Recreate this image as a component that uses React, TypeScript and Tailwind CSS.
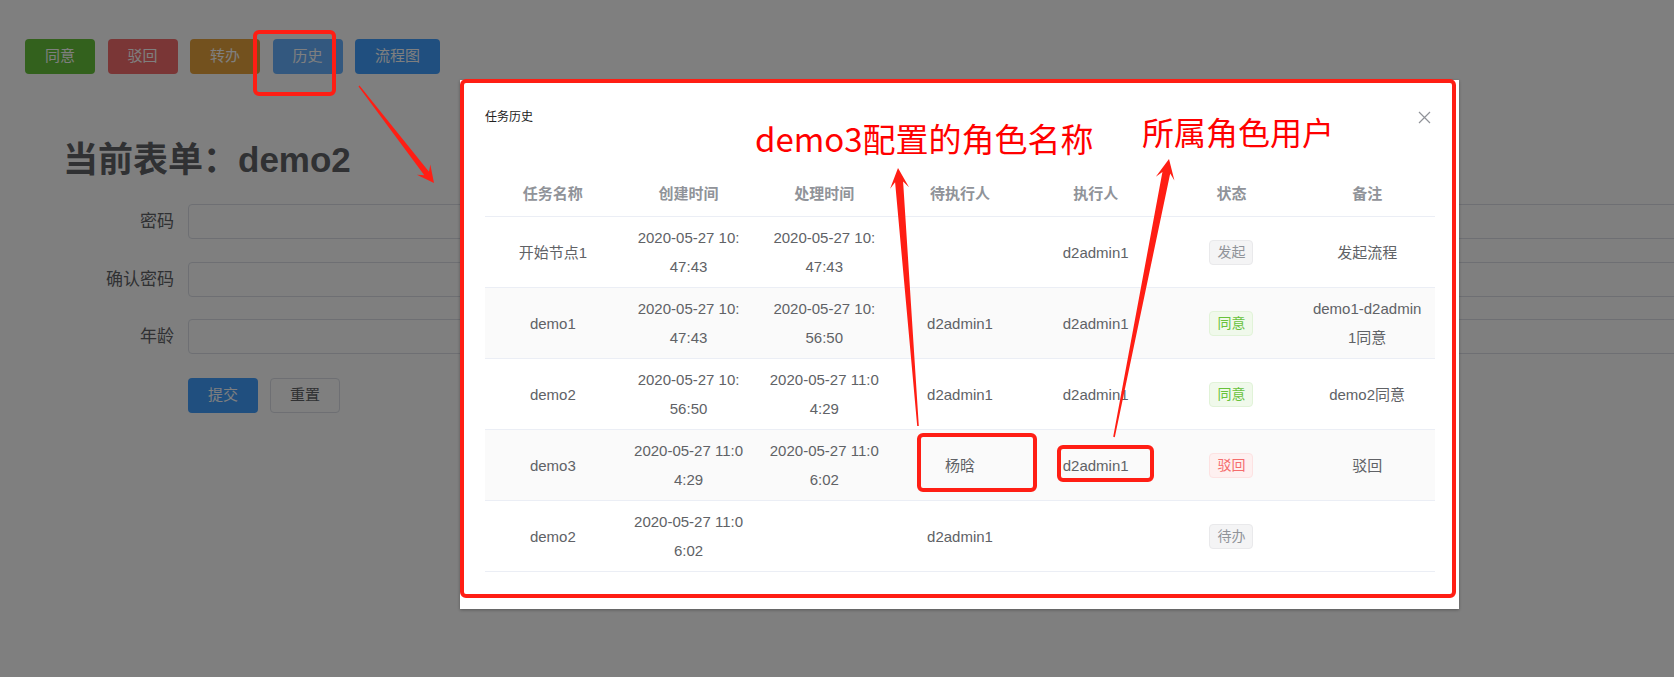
import React from "react";

const FONT = '"Liberation Sans", "Noto Sans CJK SC", sans-serif';

type TagType = "info" | "success" | "danger";

function Tag({ type, children }: { type: TagType; children: React.ReactNode }) {
  const cls =
    type === "success"
      ? "bg-[#f0f9eb] border-[#e1f3d8] text-[#67c23a]"
      : type === "danger"
      ? "bg-[#fef0f0] border-[#fde2e2] text-[#f56c6c]"
      : "bg-[#f4f4f5] border-[#e9e9eb] text-[#909399]";
  return (
    <span className={`inline-flex h-[25px] items-center rounded-[4px] border px-[7px] text-[14px] leading-none ${cls}`}>
      {children}
    </span>
  );
}

type Cell = string | string[] | { tag: TagType; text: string } | null;

const rows: Cell[][] = [
  ["开始节点1", ["2020-05-27 10:", "47:43"], ["2020-05-27 10:", "47:43"], null, "d2admin1", { tag: "info", text: "发起" }, "发起流程"],
  ["demo1", ["2020-05-27 10:", "47:43"], ["2020-05-27 10:", "56:50"], "d2admin1", "d2admin1", { tag: "success", text: "同意" }, ["demo1-d2admin", "1同意"]],
  ["demo2", ["2020-05-27 10:", "56:50"], ["2020-05-27 11:0", "4:29"], "d2admin1", "d2admin1", { tag: "success", text: "同意" }, "demo2同意"],
  ["demo3", ["2020-05-27 11:0", "4:29"], ["2020-05-27 11:0", "6:02"], "杨晗", "d2admin1", { tag: "danger", text: "驳回" }, "驳回"],
  ["demo2", ["2020-05-27 11:0", "6:02"], null, "d2admin1", null, { tag: "info", text: "待办" }, null],
];

const headers = ["任务名称", "创建时间", "处理时间", "待执行人", "执行人", "状态", "备注"];

function renderCell(c: Cell) {
  if (c === null) return null;
  if (typeof c === "string") return <span>{c}</span>;
  if (Array.isArray(c))
    return (
      <div className="flex flex-col items-center">
        {c.map((l, i) => (
          <span key={i} className="whitespace-nowrap">
            {l}
          </span>
        ))}
      </div>
    );
  return <Tag type={c.tag}>{c.text}</Tag>;
}

function arrowPoints(
  tx: number,
  ty: number,
  hx: number,
  hy: number,
  tailW: number,
  neckW: number,
  headW: number,
  headLen: number,
  neckBack: number
) {
  const dx = hx - tx;
  const dy = hy - ty;
  const L = Math.hypot(dx, dy);
  const ux = dx / L;
  const uy = dy / L;
  const nx = -uy;
  const ny = ux;
  const neck = [hx - ux * neckBack, hy - uy * neckBack];
  const barb = [hx - ux * headLen, hy - uy * headLen];
  const pts = [
    [tx + nx * tailW, ty + ny * tailW],
    [neck[0] + nx * neckW, neck[1] + ny * neckW],
    [barb[0] + nx * headW, barb[1] + ny * headW],
    [hx, hy],
    [barb[0] - nx * headW, barb[1] - ny * headW],
    [neck[0] - nx * neckW, neck[1] - ny * neckW],
    [tx - nx * tailW, ty - ny * tailW],
  ];
  return pts.map((p) => `${p[0].toFixed(1)},${p[1].toFixed(1)}`).join(" ");
}

const RED = "#ff1e14";

export default function App() {
  return (
    <div className="relative h-[677px] w-[1674px] overflow-hidden bg-white" style={{ fontFamily: FONT }}>
      {/* Page underneath */}
      <div className="flex gap-[12.5px] pl-[25px] pt-[39px]">
        <button className="h-[35px] rounded-[4px] bg-[#67c23a] px-[20px] text-[15px] text-white">同意</button>
        <button className="h-[35px] rounded-[4px] bg-[#f56c6c] px-[20px] text-[15px] text-white">驳回</button>
        <button className="h-[35px] rounded-[4px] bg-[#e6a23c] px-[20px] text-[15px] text-white">转办</button>
        <button className="h-[35px] rounded-[4px] bg-[#66b1ff] px-[20px] text-[15px] text-white">历史</button>
        <button className="h-[35px] rounded-[4px] bg-[#409eff] px-[20px] text-[15px] text-white">流程图</button>
      </div>

      <h2 className="ml-[63px] mt-[66px] text-[35px] font-bold leading-[40px] text-[#606266]">当前表单：demo2</h2>

      <div className="mt-[24px] flex flex-col pl-[74px]">
        {["密码", "确认密码", "年龄"].map((label, i) => (
          <div key={label} className={`flex h-[35px] items-center ${i === 1 ? "mt-[23px]" : i === 2 ? "mt-[22px]" : ""}`}>
            <div className="w-[100px] shrink-0 whitespace-nowrap text-right text-[17px] text-[#606266]">{label}</div>
            <div className="ml-[14px] h-[35px] w-[1600px] shrink-0 rounded-[4px] border border-[#dcdfe6] bg-white" />
          </div>
        ))}
        <div className="mt-[24px] flex gap-[12px] pl-[114px]">
          <button className="h-[35px] w-[70px] rounded-[4px] bg-[#409eff] text-[15px] text-white">提交</button>
          <button className="h-[35px] w-[70px] rounded-[4px] border border-[#dcdfe6] bg-white text-[15px] text-[#606266]">
            重置
          </button>
        </div>
      </div>

      {/* Mask */}
      <div className="absolute inset-0 bg-[rgba(0,0,0,0.5)]" />

      {/* Dialog */}
      <div className="absolute left-[460px] top-[80px] h-[529px] w-[999px] bg-white shadow-[0_1px_3px_rgba(0,0,0,0.3)]">
        <div className="flex h-[92px] items-start justify-between pl-[25px] pr-[28px] pt-[27px]">
          <span className="text-[12px] leading-[20px] text-[#222]">任务历史</span>
          <svg width="13" height="13" viewBox="0 0 13 13" className="mt-[4px]">
            <path d="M1 1 L12 12 M12 1 L1 12" stroke="#909399" strokeWidth="1.2" fill="none" />
          </svg>
        </div>
        <div className="mx-[25px] w-[950px]">
          <div className="grid h-[45px] grid-cols-7 items-center border-b border-[#ebeef5]">
            {headers.map((h) => (
              <div key={h} className="text-center text-[15px] font-bold text-[#909399]">
                {h}
              </div>
            ))}
          </div>
          {rows.map((r, ri) => (
            <div
              key={ri}
              className={`grid h-[71px] grid-cols-7 items-center border-b border-[#ebeef5] ${ri % 2 === 1 ? "bg-[#fafafa]" : "bg-white"}`}
            >
              {r.map((c, ci) => (
                <div key={ci} className="flex justify-center px-[10px] text-center text-[15px] leading-[29px] text-[#606266]">
                  {renderCell(c)}
                </div>
              ))}
            </div>
          ))}
        </div>
      </div>

      {/* Annotations */}
      <svg className="pointer-events-none absolute left-0 top-0" width="1674" height="677" viewBox="0 0 1674 677">
        <rect x="255" y="32" width="79" height="62" rx="4" fill="none" stroke={RED} strokeWidth="4" />
        <rect x="462" y="81" width="992" height="515" rx="4" fill="none" stroke={RED} strokeWidth="4" />
        <rect x="919" y="435" width="116" height="55" rx="4" fill="none" stroke={RED} strokeWidth="4" />
        <rect x="1059" y="447" width="93" height="33" rx="4" fill="none" stroke={RED} strokeWidth="4" />
        <polygon points={arrowPoints(359, 86, 434, 183, 0.6, 3, 8.5, 17, 12)} fill={RED} />
        <polygon points={arrowPoints(918, 426, 898, 168, 0.8, 4, 9.5, 20, 14)} fill={RED} />
        <polygon points={arrowPoints(1114, 437, 1169, 159, 0.8, 4, 9.5, 20, 14)} fill={RED} />
      </svg>
      <div
        className="pointer-events-none absolute left-[755px] top-[118px] whitespace-nowrap text-[33px] leading-[40px] text-[#ff0000]"
        style={{ fontFamily: '"Noto Sans CJK SC", sans-serif' }}
      >
        demo3配置的角色名称
      </div>
      <div
        className="pointer-events-none absolute left-[1142px] top-[111px] whitespace-nowrap text-[32px] leading-[40px] text-[#ff0000]"
        style={{ fontFamily: '"Noto Sans CJK SC", sans-serif' }}
      >
        所属角色用户
      </div>
    </div>
  );
}
